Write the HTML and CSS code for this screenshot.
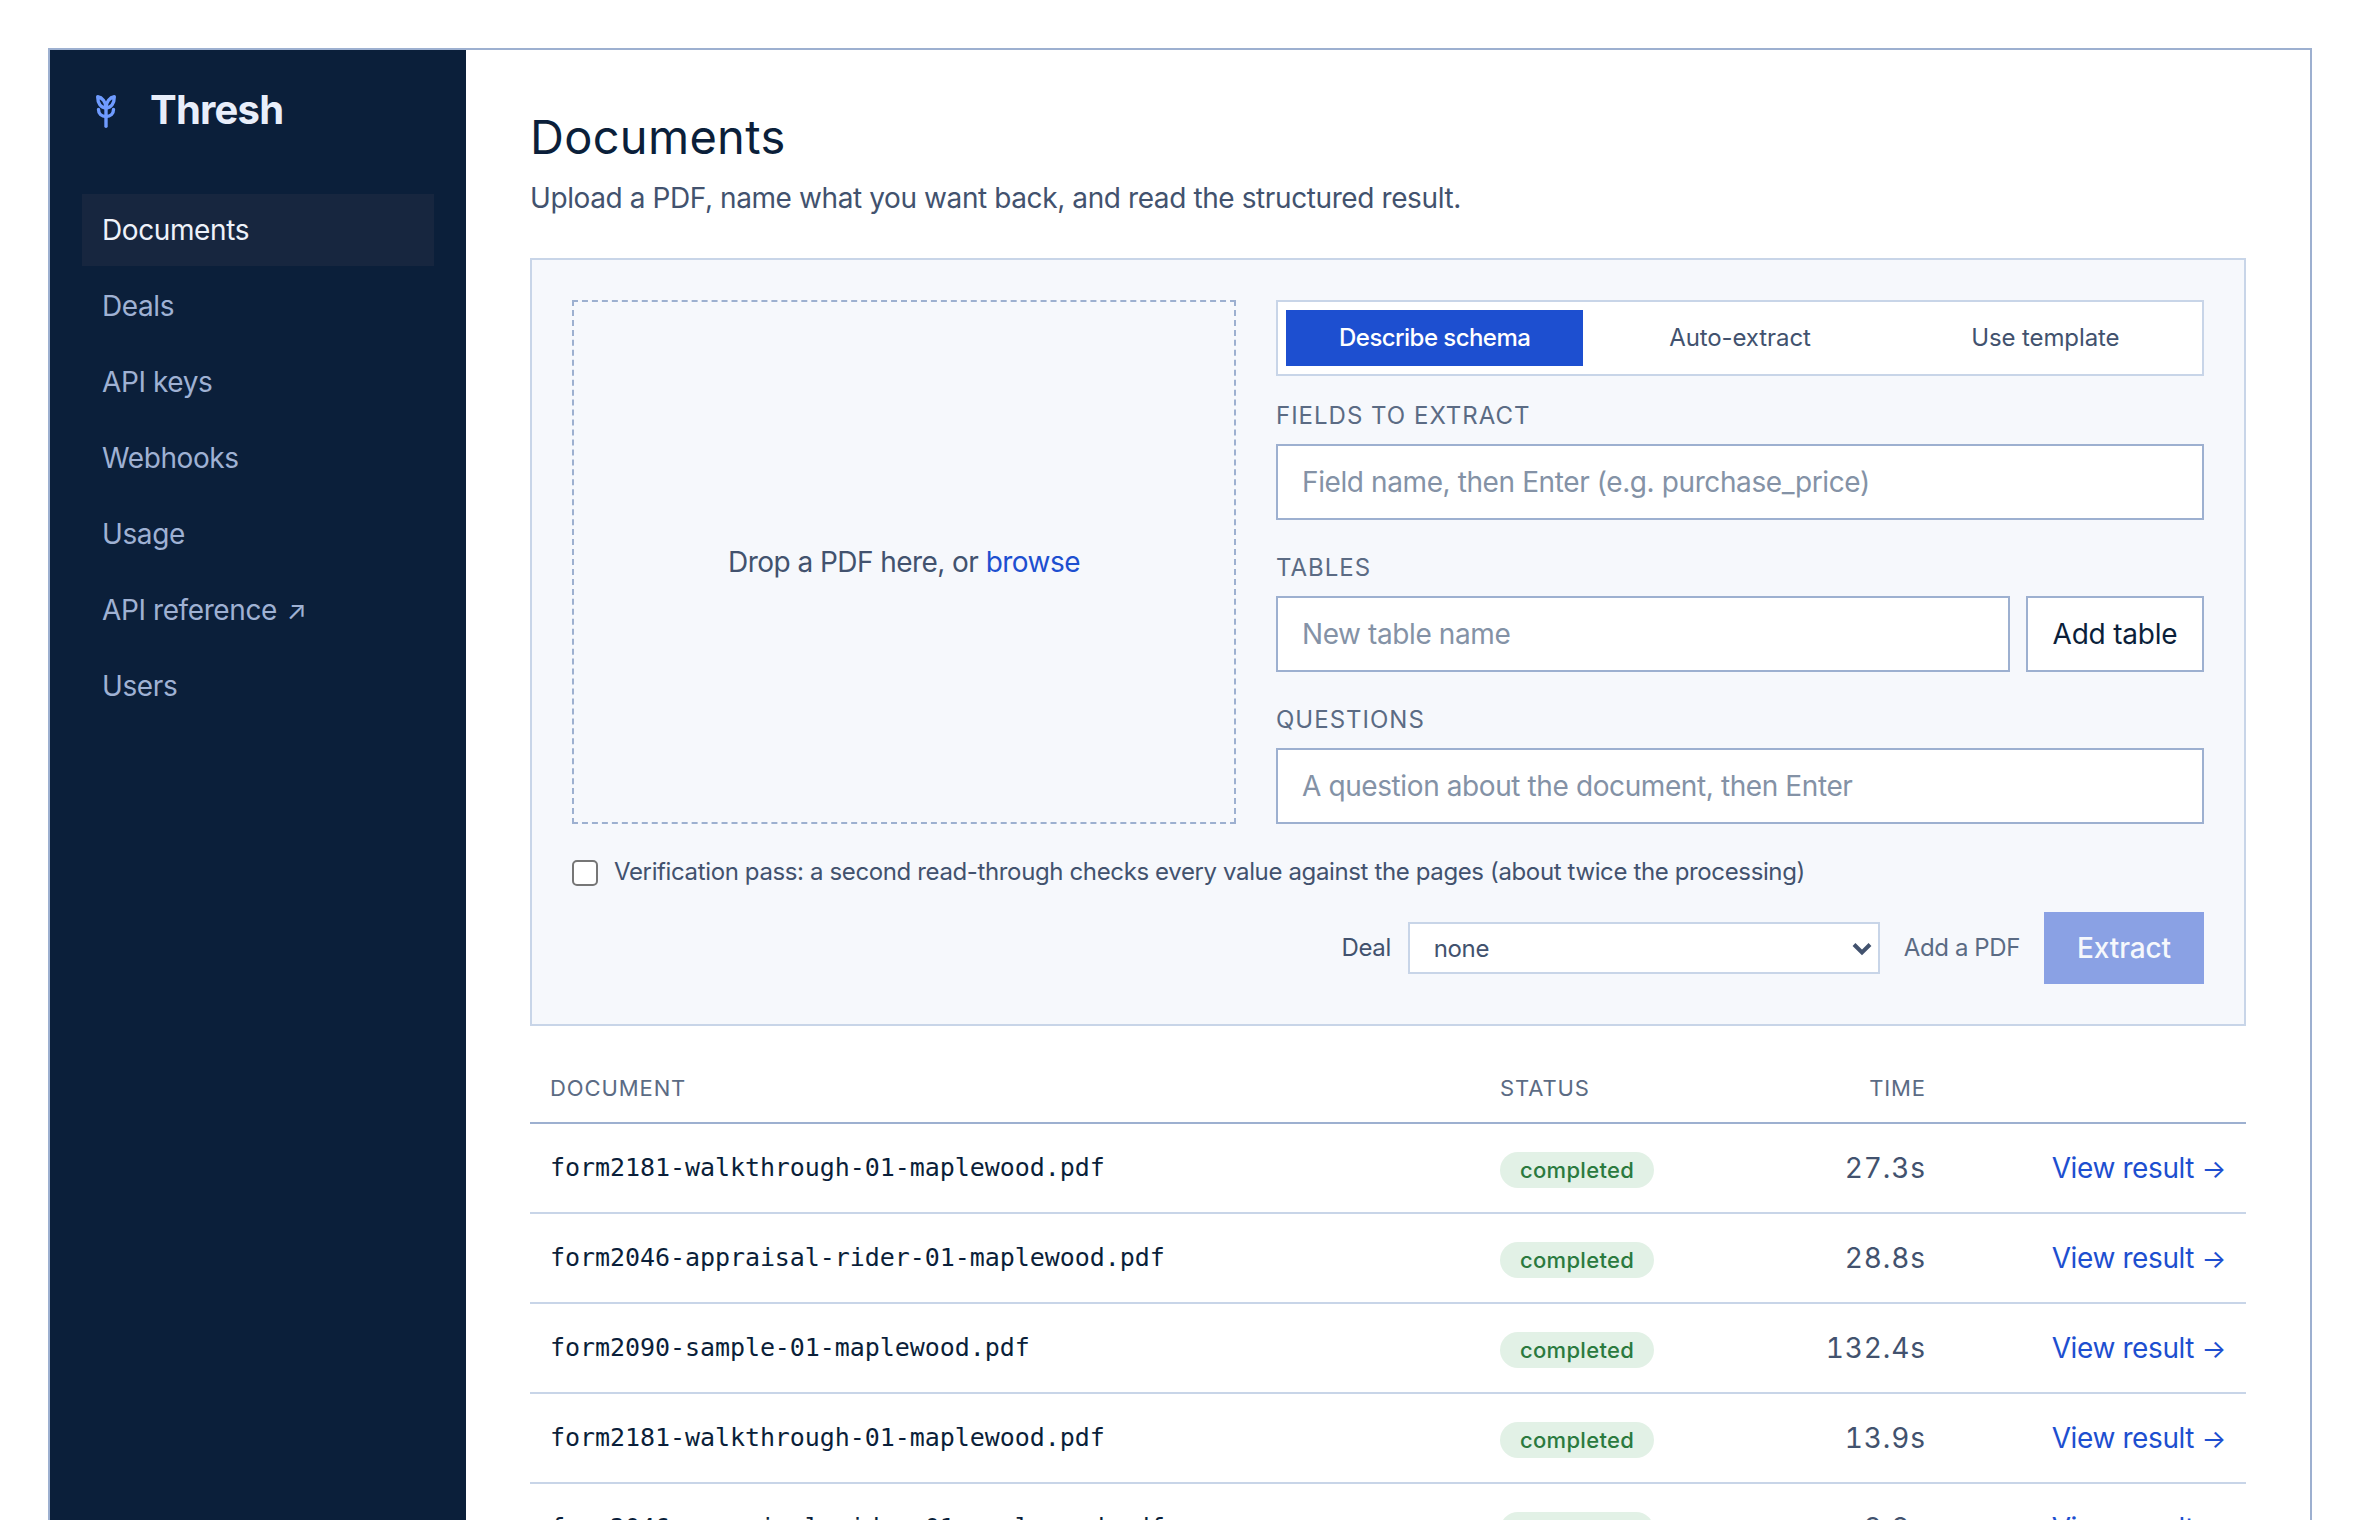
FILE: index.html
```
<!DOCTYPE html>
<html lang="en">
<head>
  <meta charset="UTF-8">
  <title>Thresh - Documents</title>
  <link rel="stylesheet" href="styles.css">
</head>
<body>
<div class="app">
  <aside class="sidebar">
    <div class="brand">
      <svg class="brand-icon" viewBox="0 0 20 33" fill="none" stroke="currentColor" stroke-width="3.4" stroke-linecap="round" stroke-linejoin="round">
        <path d="M10 31.200V13"/>
        <path d="M10 13C4.500 12.500 1.700 8 1.700 1.800C6 2.500 10 6.500 10 13Z"/>
        <path d="M10 13C15.500 12.500 18.300 8 18.300 1.800C14 2.500 10 6.500 10 13Z"/>
        <path d="M2.500 14.500C2.500 18.500 5.500 21.500 10 21.500C14.500 21.500 17.500 18.500 17.500 14.500"/>
      </svg>
      <span class="brand-name">Thresh</span>
    </div>
    <nav class="nav">
      <a class="active">Documents</a>
      <a>Deals</a>
      <a>API keys</a>
      <a>Webhooks</a>
      <a>Usage</a>
      <a>API reference <span class="external">↗</span></a>
      <a>Users</a>
    </nav>
  </aside>

  <main class="main">
    <h1>Documents</h1>
    <p class="lead">Upload a PDF, name what you want back, and read the structured result.</p>

    <section class="panel">
      <div class="columns">
        <div class="dropzone"><span>Drop a PDF here, or <a>browse</a></span></div>
        <div class="schema">
          <div class="tabs">
            <button class="active">Describe schema</button>
            <button>Auto-extract</button>
            <button>Use template</button>
          </div>
          <label>Fields to extract</label>
          <div class="input">Field name, then Enter (e.g. purchase_price)</div>
          <label>Tables</label>
          <div class="input-row">
            <div class="input">New table name</div>
            <button class="add">Add table</button>
          </div>
          <label>Questions</label>
          <div class="input">A question about the document, then Enter</div>
        </div>
      </div>
      <div class="verify">
        <span class="checkbox"></span>
        <span>Verification pass: a second read-through checks every value against the pages (about twice the processing)</span>
      </div>
      <div class="actions">
        <span>Deal</span>
        <div class="select">
          <span>none</span>
          <svg class="chevron" viewBox="0 0 20 14" fill="none" stroke="currentColor" stroke-width="4"><path d="M2 2.500L10 10.500L18 2.500"/></svg>
        </div>
        <span class="hint">Add a PDF</span>
        <button class="extract">Extract</button>
      </div>
    </section>

    <table class="docs">
      <thead>
        <tr>
          <th class="name">Document</th>
          <th class="status">Status</th>
          <th class="time">Time</th>
          <th></th>
        </tr>
      </thead>
      <tbody>
        <tr>
          <td class="name">form2181-walkthrough-01-maplewood.pdf</td>
          <td><span class="pill">completed</span></td>
          <td class="time">27.3s</td>
          <td class="link"><a>View result <span class="arrow">→</span></a></td>
        </tr>
        <tr>
          <td class="name">form2046-appraisal-rider-01-maplewood.pdf</td>
          <td><span class="pill">completed</span></td>
          <td class="time">28.8s</td>
          <td class="link"><a>View result <span class="arrow">→</span></a></td>
        </tr>
        <tr>
          <td class="name">form2090-sample-01-maplewood.pdf</td>
          <td><span class="pill">completed</span></td>
          <td class="time">132.4s</td>
          <td class="link"><a>View result <span class="arrow">→</span></a></td>
        </tr>
        <tr>
          <td class="name">form2181-walkthrough-01-maplewood.pdf</td>
          <td><span class="pill">completed</span></td>
          <td class="time">13.9s</td>
          <td class="link"><a>View result <span class="arrow">→</span></a></td>
        </tr>
        <tr>
          <td class="name">form2046-appraisal-rider-01-maplewood.pdf</td>
          <td><span class="pill">completed</span></td>
          <td class="time">9.8s</td>
          <td class="link"><a>View result <span class="arrow">→</span></a></td>
        </tr>
      </tbody>
    </table>
  </main>
</div>
</body>
</html>
```
FILE: styles.css
```
* {
  box-sizing: border-box;
}

body {
  margin: 0;
  height: 1520px;
  overflow: hidden;
  padding: 48px 48px 0;
  background: #fff;
  color: #42526e;
  font-family: Inter, "Liberation Sans", sans-serif;
  font-size: 28px;
  line-height: 40px;
  letter-spacing: -0.4px;
}

.app {
  display: flex;
  height: 1600px;
  border: 2px solid #9db0d0;
}

a {
  color: inherit;
}

button {
  margin: 0;
  padding: 0;
  border: none;
  background: none;
  color: inherit;
  font: inherit;
  letter-spacing: inherit;
}

/* sidebar */

.sidebar {
  width: 416px;
  flex: none;
  padding: 32px;
  background: #0b1f3a;
  color: #9fb1d3;
}

.brand {
  display: flex;
  align-items: center;
  height: 56px;
  margin-bottom: 56px;
  padding-left: 14px;
}

.brand-icon {
  width: 20px;
  height: 33px;
  margin: 2px 34px 0 0;
  color: #6f9bff;
}

.brand-name {
  color: #e8eefa;
  font-size: 40px;
  font-weight: 700;
  letter-spacing: -0.8px;
}

.nav {
  display: flex;
  flex-direction: column;
  gap: 4px;
}

.nav a {
  height: 72px;
  padding: 0 20px;
  line-height: 73px;
}

.nav .active {
  background: #17263f;
  color: #eef2fa;
}

.external {
  margin-left: 2px;
  font-size: 26px;
}

/* content */

.main {
  flex: 1;
  padding: 59px 64px 0;
}

h1 {
  margin: 0 0 13px;
  color: #0b1f3a;
  font-size: 47px;
  font-weight: 400;
  line-height: 56px;
  letter-spacing: 0.3px;
}

.lead {
  margin: 0 0 40px;
}

.panel {
  padding: 40px;
  border: 2px solid #c8d5e8;
  background: #f6f8fc;
}

.columns {
  display: grid;
  grid-template-columns: 664px 1fr;
  gap: 40px;
}

.dropzone {
  display: flex;
  align-items: center;
  justify-content: center;
  border: 2px dashed #9db0d0;
  letter-spacing: -0.55px;
}

.dropzone a,
.link a {
  color: #1d4fd0;
}

.tabs {
  display: grid;
  grid-template-columns: repeat(3, 1fr);
  gap: 8px;
  height: 76px;
  padding: 8px;
  border: 2px solid #c8d5e8;
  background: #fff;
  font-size: 24px;
  letter-spacing: -0.1px;
}

.tabs .active {
  background: #1d4fd0;
  color: #fff;
  font-weight: 500;
  letter-spacing: -0.55px;
}

label {
  display: block;
  margin: 30px 0 10px;
  color: #5b6b84;
  font-size: 24px;
  line-height: 36px;
  letter-spacing: 1px;
  text-transform: uppercase;
}

.tabs + label {
  margin-top: 22px;
}

.input {
  height: 76px;
  padding: 0 24px;
  border: 2px solid #9db0d0;
  background: #fff;
  color: #8492a6;
  line-height: 73px;
}

.input-row {
  display: flex;
  gap: 16px;
}

.input-row .input {
  flex: 1;
}

.add {
  width: 178px;
  border: 2px solid #9db0d0;
  background: #fff;
  color: #0b1f3a;
  letter-spacing: -0.2px;
}

.verify {
  display: flex;
  align-items: center;
  gap: 16px;
  height: 36px;
  margin-top: 30px;
  font-size: 24px;
  letter-spacing: -0.37px;
}

.checkbox {
  width: 26px;
  height: 26px;
  margin-top: 2px;
  border: 2px solid #767676;
  border-radius: 5px;
  background: #fff;
}

.actions {
  display: flex;
  align-items: center;
  justify-content: flex-end;
  margin-top: 22px;
  font-size: 24px;
}

.select {
  display: flex;
  align-items: center;
  justify-content: space-between;
  width: 472px;
  height: 52px;
  margin: 0 24px 0 17px;
  padding: 2px 6px 0 24px;
  border: 2px solid #c8d5e8;
  background: #fff;
}

.chevron {
  width: 20px;
  height: 14px;
}

.hint {
  color: #5b6b84;
}

.extract {
  width: 160px;
  height: 72px;
  margin-left: 24px;
  background: #8aa1e4;
  color: #f6f8fc;
  font-size: 28px;
  font-weight: 500;
  letter-spacing: -0.1px;
}

/* documents table */

.docs {
  width: 100%;
  margin-top: 34px;
  border-spacing: 0;
  table-layout: fixed;
}

.docs th {
  height: 64px;
  padding: 0 20px 6px;
  border-bottom: 2px solid #9db0d0;
  color: #5b6b84;
  font-size: 22px;
  font-weight: 400;
  letter-spacing: 0.9px;
  text-align: left;
  text-transform: uppercase;
}

.docs td {
  height: 90px;
  padding: 0 20px;
  border-bottom: 2px solid #c8d5e8;
}

.docs .name {
  width: 950px;
}

.docs .status {
  width: 200px;
}

.docs .time {
  width: 266px;
  text-align: right;
}

.docs td.name {
  color: #0b1f3a;
  font-family: "DejaVu Sans Mono", monospace;
  font-size: 25px;
  letter-spacing: -0.06px;
}

.docs td.time {
  font-variant-numeric: tabular-nums;
  letter-spacing: 0.9px;
}

.docs .link {
  padding-top: 1px;
  text-align: right;
}

.arrow {
  font-size: 26px;
}

.pill {
  display: inline-block;
  height: 36px;
  padding: 0 20px;
  border-radius: 18px;
  background: #e2f1e6;
  color: #2b7a3f;
  font-size: 22px;
  font-weight: 500;
  line-height: 36px;
  letter-spacing: 0.3px;
}
```
